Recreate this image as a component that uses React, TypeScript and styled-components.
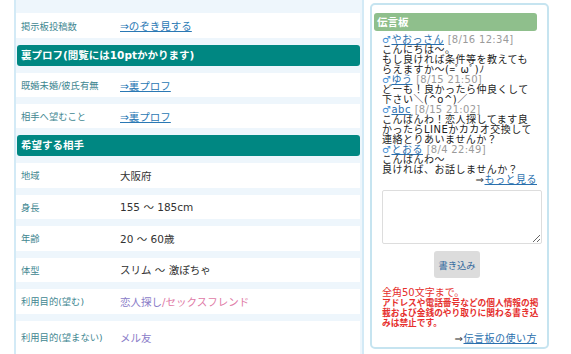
import React from "react";
import styled, { createGlobalStyle } from "styled-components";

const Global = createGlobalStyle`
  html, body { margin: 0; padding: 0; background: #ffffff; }
  body { font-family: "DejaVu Sans", "Noto Sans CJK JP", sans-serif; }
`;

const Page = styled.div`
  display: flex;
  align-items: flex-start;
  width: 571px;
  height: 354px;
  overflow: hidden;
`;

/* ---------- left profile table ---------- */
const ProfilePanel = styled.div`
  margin-left: 14px;
  width: 350px;
  height: 354px;
  box-sizing: border-box;
  border-left: 2px solid #d3eaf6;
  border-right: 2px solid #d3eaf6;
  background: #eef6fc;
  padding: 13px 2px 0 0;
  display: flex;
  flex-direction: column;
  gap: 7px;
`;

const Row = styled.div<{ $h: number }>`
  display: flex;
  align-items: center;
  flex: none;
  height: ${(p) => p.$h}px;
  background: #ffffff;
  padding-left: 5px;
`;

const Label = styled.div`
  width: 99px;
  flex: none;
  font-size: 9.3px;
  color: #3f8791;
  white-space: nowrap;
`;

const Value = styled.div`
  font-size: 10.5px;
  color: #333333;
  white-space: nowrap;
`;

const Tone = styled.span<{ $c: string }>`
  color: ${(p) => p.$c};
`;

const TableLink = styled.a`
  font-size: 10.5px;
  color: #2a78b4;
  text-decoration: underline;
  white-space: nowrap;
`;

const SectionHead = styled.div`
  flex: none;
  height: 21px;
  margin-left: 1px;
  border-radius: 3px;
  background: #008782;
  color: #ffffff;
  font-weight: bold;
  font-size: 10.5px;
  line-height: 21px;
  padding-left: 4px;
  white-space: nowrap;
`;

/* ---------- right message board ---------- */
const Board = styled.div`
  margin: 3px 0 0 6px;
  width: 179px;
  height: 346px;
  box-sizing: border-box;
  border: 2px solid #c6e4f0;
  border-radius: 5px;
  background: #ffffff;
  padding: 8px 5px 0 2px;
  display: flex;
  flex-direction: column;
`;

const BoardTitle = styled.div`
  height: 18px;
  margin-right: 5px;
  border-radius: 3px;
  background: #8fbf8c;
  color: #ffffff;
  font-weight: bold;
  font-size: 10.5px;
  line-height: 18px;
  padding-left: 3px;
`;

const Messages = styled.div<{ $mt: number }>`
  margin: ${(p) => p.$mt}px 5px 0 8px;
  font-size: 10px;
  letter-spacing: 0.5px;
  line-height: 10px;
  color: #222222;
  white-space: nowrap;
`;

const MsgLine = styled.div`
  height: 10px;
`;

const Male = styled.span`
  color: #3c8dd4;
`;

const Name = styled.a`
  color: #2a70ae;
  text-decoration: underline;
`;

const Stamp = styled.span`
  color: #9b9b9b;
  letter-spacing: 0.3px;
`;

const MoreLine = styled.div`
  height: 10px;
  text-align: right;
  font-size: 10px;
  letter-spacing: 0.5px;
  line-height: 10px;
  color: #333333;
  white-space: nowrap;
`;

const MoreLink = styled.a`
  color: #2a70ae;
  text-decoration: underline;
`;

const Input = styled.textarea`
  display: block;
  margin: 5px 0 0 8px;
  width: 160px;
  height: 54px;
  box-sizing: border-box;
  border: 1px solid #dddddd;
  border-radius: 2px;
  padding: 2px;
  font-family: inherit;
  font-size: 10.5px;
`;

const PostButton = styled.button`
  margin: 7px 0 0 60px;
  align-self: flex-start;
  width: 46px;
  height: 27px;
  border: none;
  border-radius: 3px;
  background: #dcdcdc;
  color: #32689c;
  font-family: inherit;
  font-size: 9.3px;
  padding: 0;
`;

const Notice = styled.div`
  margin: 10px 5px 0 8px;
  color: #e6302e;
`;

const NoticeLead = styled.div`
  font-size: 10px;
  line-height: 10px;
  white-space: nowrap;
`;

const NoticeBody = styled.div`
  font-size: 8.7px;
  line-height: 10px;
  font-weight: bold;
  white-space: nowrap;
`;

const Footer = styled.div`
  margin: 6px 5px 0 8px;
`;

type Entry = { name: string; stamp: string; lines: string[] };

const entries: Entry[] = [
  {
    name: "やおっさん",
    stamp: "[8/16 12:34]",
    lines: ["こんにちは～。", "もし良ければ条件等を教えても", "らえますか～(=ﾟωﾟ)ﾉ"],
  },
  {
    name: "ゆう",
    stamp: "[8/15 21:50]",
    lines: ["どーも！良かったら仲良くして", "下さい＼(^o^)／"],
  },
  {
    name: "abc",
    stamp: "[8/15 21:02]",
    lines: ["こんばんわ！恋人探してます良", "かったらLINEかカカオ交換して", "連絡とりあいませんか？"],
  },
  {
    name: "とおる",
    stamp: "[8/4 22:49]",
    lines: ["こんばんわ～", "良ければ、お話しませんか？"],
  },
];

export default function App() {
  return (
    <>
      <Global />
      <Page>
        <ProfilePanel>
          <Row $h={25}>
            <Label>掲示板投稿数</Label>
            <TableLink href="#">⇒のぞき見する</TableLink>
          </Row>
          <SectionHead>裏プロフ(閲覧には10ptかかります)</SectionHead>
          <Row $h={24}>
            <Label>既婚未婚/彼氏有無</Label>
            <TableLink href="#">⇒裏プロフ</TableLink>
          </Row>
          <Row $h={24}>
            <Label>相手へ望むこと</Label>
            <TableLink href="#">⇒裏プロフ</TableLink>
          </Row>
          <SectionHead>希望する相手</SectionHead>
          <Row $h={24.5}>
            <Label>地域</Label>
            <Value>大阪府</Value>
          </Row>
          <Row $h={24.5}>
            <Label>身長</Label>
            <Value>155 ～ 185cm</Value>
          </Row>
          <Row $h={24.5}>
            <Label>年齢</Label>
            <Value>20 ～ 60歳</Value>
          </Row>
          <Row $h={24.5}>
            <Label>体型</Label>
            <Value>スリム ～ 激ぽちゃ</Value>
          </Row>
          <Row $h={24.5}>
            <Label>利用目的(望む)</Label>
            <Value>
              <Tone $c="#8a7cc8">恋人探し</Tone>
              <Tone $c="#e07aa6">/セックスフレンド</Tone>
            </Value>
          </Row>
          <Row $h={33}>
            <Label>利用目的(望まない)</Label>
            <Value>
              <Tone $c="#8a7cc8">メル友</Tone>
            </Value>
          </Row>
        </ProfilePanel>

        <Board>
          <BoardTitle>伝言板</BoardTitle>
          <Messages $mt={4}>
            {entries.map((e) => (
              <div key={e.name}>
                <MsgLine>
                  <Male>♂</Male>
                  <Name href="#">{e.name}</Name> <Stamp>{e.stamp}</Stamp>
                </MsgLine>
                {e.lines.map((l) => (
                  <MsgLine key={l}>{l}</MsgLine>
                ))}
              </div>
            ))}
            <MoreLine>
              ⇒<MoreLink href="#">もっと見る</MoreLink>
            </MoreLine>
          </Messages>
          <Input />
          <PostButton>書き込み</PostButton>
          <Notice>
            <NoticeLead>全角50文字まで。</NoticeLead>
            <NoticeBody>
              アドレスや電話番号などの個人情報の掲
              <br />
              載および金銭のやり取りに関わる書き込
              <br />
              みは禁止です。
            </NoticeBody>
          </Notice>
          <Footer>
            <MoreLine>
              ⇒<MoreLink href="#">伝言板の使い方</MoreLink>
            </MoreLine>
          </Footer>
        </Board>
      </Page>
    </>
  );
}
